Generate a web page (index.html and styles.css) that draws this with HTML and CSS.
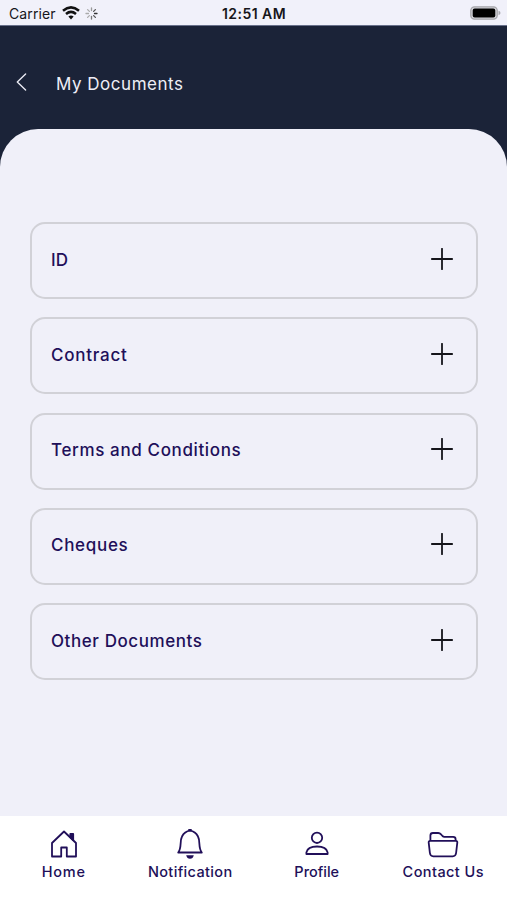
FILE: index.html
```html
<!DOCTYPE html>
<html lang="en">
<head>
<meta charset="utf-8">
<title>My Documents</title>
<link rel="stylesheet" href="styles.css">
</head>
<body>
<div class="app">
  <div class="status">
    <div class="carrier"><span>Carrier</span>
      <svg class="wifi" width="18" height="14" viewBox="0 0 18 14" fill="none" stroke="#111" stroke-width="2.5"><path d="M1 4.7Q9-2 17 4.7M4 8Q9 3.8 14 8"/><path d="M6.4 10.6Q9 8.2 11.6 10.6L9 13.4Z" fill="#111" stroke="none"/></svg>
      <svg width="13" height="13" viewBox="-6.5 -6.5 13 13" stroke-width="1.3" stroke-linecap="round"><path d="M0-3V-5.5" stroke="#999"/><path d="M2.1-2.1L3.9-3.9" stroke="#555"/><path d="M3 0H5.5" stroke="#333"/><path d="M2.1 2.1L3.9 3.9" stroke="#555"/><path d="M0 3V5.5" stroke="#777"/><path d="M-2.1 2.1L-3.9 3.9M-3 0H-5.5M-2.1-2.1L-3.9-3.9" stroke="#aaa"/></svg>
    </div>
    <div class="time">12:51 AM</div>
    <svg class="battery" width="31" height="14" viewBox="0 0 31 14"><rect x=".8" y=".8" width="26.4" height="12.4" rx="3.7" fill="#d5d5da" stroke="#a5a5aa" stroke-width="1.3"/><rect x="2.7" y="2.5" width="22.6" height="9" rx="2" fill="#000"/><path d="M28.5 4.8Q30.5 5.4 30.5 7T28.5 9.2Z" fill="#aaaab0"/></svg>
  </div>
  <header class="header">
    <svg width="12" height="18" viewBox="0 0 12 18" fill="none" stroke="#e9e9f2" stroke-width="1.4" stroke-linecap="round" stroke-linejoin="round"><path d="M10.6 1L2.3 9L10.6 17"/></svg>
    <h1>My Documents</h1>
  </header>
  <main class="sheet">
    <div class="card"><span class="t-id">ID</span><svg class="plus" viewBox="0 0 22 22"><path d="M11 .8V21.2M.8 11H21.2"/></svg></div>
    <div class="card"><span class="t-contract">Contract</span><svg class="plus" viewBox="0 0 22 22"><path d="M11 .8V21.2M.8 11H21.2"/></svg></div>
    <div class="card"><span class="t-terms">Terms and Conditions</span><svg class="plus" viewBox="0 0 22 22"><path d="M11 .8V21.2M.8 11H21.2"/></svg></div>
    <div class="card"><span class="t-cheques">Cheques</span><svg class="plus" viewBox="0 0 22 22"><path d="M11 .8V21.2M.8 11H21.2"/></svg></div>
    <div class="card"><span class="t-other">Other Documents</span><svg class="plus" viewBox="0 0 22 22"><path d="M11 .8V21.2M.8 11H21.2"/></svg></div>
  </main>
  <nav class="tabs">
    <div class="tab"><svg viewBox="0 0 32 32"><path d="M16 3.5L4 15V28.5H13.2V19.5H18.8V28.5H28V15Z"/><path d="M22.3 6H25.2V12L22.3 9.2Z" fill="#210f59"/></svg><span class="n-home">Home</span></div>
    <div class="tab"><svg viewBox="0 0 32 32"><path d="M4.2 24.5C8 20 5.5 13 8 8.5C9.8 5 12.5 3.2 16 2.7C19.5 3.2 22.2 5 24 8.5C26.5 13 24 20 27.8 24.5Z"/><path d="M15 2.5V1.8H17V2.5"/><path d="M12.2 27.2H19.8Q19 30.7 16 30.7T12.2 27.2Z" fill="#210f59" stroke="none"/></svg><span class="n-notification">Notification</span></div>
    <div class="tab"><svg viewBox="0 0 32 32"><circle cx="16" cy="9.8" r="5.2"/><path d="M5.4 26V24.4C6.2 20.4 10.5 18.5 16 18.5S25.8 20.4 26.6 24.4V26Z"/></svg><span class="n-profile">Profile</span></div>
    <div class="tab"><svg viewBox="0 0 32 32"><path d="M3.4 12.9V7.5Q3.4 5 5.9 5H11.2Q12.8 5 13.8 6.2L15.5 8Q16.3 8.8 17.4 8.8H26.2Q28.6 8.8 28.6 11.2V12.9"/><path d="M3.3 12.9H28.7Q30.6 12.9 30.3 14.7L29.1 25Q28.7 28.3 25.7 28.3H6.3Q3.3 28.3 2.9 25L1.7 14.7Q1.4 12.9 3.3 12.9Z"/></svg><span class="n-contact">Contact Us</span></div>
  </nav>
</div>
</body>
</html>
```
FILE: styles.css
```css
* { box-sizing: border-box; }
body { margin: 0; background: #1b2338; }
.app { width: 507px; height: 900px; display: flex; flex-direction: column; overflow: hidden; background: #1b2338; font-family: Inter, "Noto Sans", sans-serif; }
.status { height: 26px; flex: none; display: grid; grid-template-columns: 1fr auto 1fr; align-items: center; padding: 1px 6px 0 7px; background: #f1f1fa; color: #16161b; border-bottom: 1px solid #68708a; }
.carrier { display: flex; align-items: center; padding-left: 2px; font-size: 14px; letter-spacing: .12px; }
.carrier .wifi { margin: 0 5px 0 6px; }
.time { font-size: 14px; font-weight: 600; letter-spacing: .45px; }
.battery { justify-self: end; }
.header { height: 103px; flex: none; display: flex; align-items: center; padding: 9px 0 0 15px; }
.header h1 { margin: 3px 0 0 29px; font-size: 17px; line-height: 24px; font-weight: 400; color: #eeeef6; letter-spacing: .52px; }
.sheet { flex: 1; display: flex; flex-direction: column; gap: 18.25px; padding: 93px 29px 0 30px; border-radius: 38px 38px 0 0; background: #f0f0f9; }
.card { height: 77px; flex: none; display: flex; align-items: center; justify-content: space-between; padding: 0 23px 2px 19px; border: 2px solid #d1d1d7; border-radius: 15px; font-size: 17px; font-weight: 500; color: #210f59; }
.card span { line-height: 24px; }
.t-contract { letter-spacing: .75px; }
.t-terms { letter-spacing: .63px; }
.t-cheques { letter-spacing: .7px; }
.t-other { letter-spacing: .58px; }
.plus { width: 22px; height: 22px; margin-bottom: 2px; fill: none; stroke: #15151b; stroke-width: 1.8; stroke-linecap: round; }
.tabs { height: 84px; flex: none; display: grid; grid-template-columns: repeat(4, 126.5px); padding: 12px 0 0 .5px; background: #fff; }
.tab { display: flex; flex-direction: column; align-items: center; font-size: 14.5px; font-weight: 500; color: #210f59; }
.tab svg { width: 32px; height: 32px; fill: none; stroke: #210f59; stroke-width: 1.8; stroke-linejoin: round; }
.tab span { line-height: 20px; margin-top: 2px; white-space: nowrap; }
.n-home { letter-spacing: .7px; }
.n-notification { letter-spacing: .36px; }
.n-contact { letter-spacing: .42px; }
```
